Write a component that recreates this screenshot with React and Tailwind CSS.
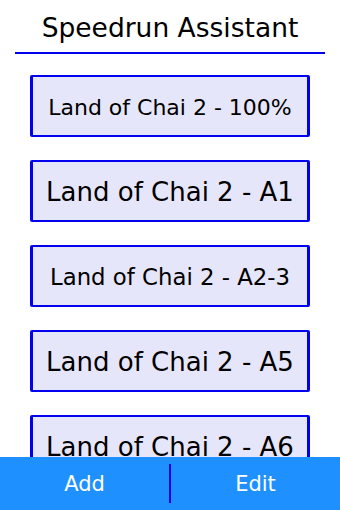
import React from "react";

const runs = [
  { name: "Land of Chai 2 - 100%", size: "text-[22px]" },
  { name: "Land of Chai 2 - A1", size: "text-[26px]" },
  { name: "Land of Chai 2 - A2-3", size: "text-[22.8px]" },
  { name: "Land of Chai 2 - A5", size: "text-[26px]" },
  { name: "Land of Chai 2 - A6", size: "text-[26px]" },
];

export default function App() {
  return (
    <div className="flex h-[510px] w-[340px] flex-col overflow-hidden bg-white font-['DejaVu_Sans',sans-serif]">
      <div className="flex h-[52px] items-center justify-center pt-[3px] text-[26.5px] text-black">Speedrun Assistant</div>
      <div className="mx-[15px] h-[2px] bg-[#0000ee]" />

      <div className="flex flex-1 flex-col items-center gap-[23px] overflow-hidden pt-[21px]">
        {runs.map(r => (
          <button
            key={r.name}
            type="button"
            className={`flex h-[62px] w-[280px] shrink-0 items-center justify-center rounded-[2px] border-x-[3px] border-y-[2px] border-[#0000ee] bg-[#e6e6fa] pt-[2px] text-black ${r.size}`}
          >
            {r.name}
          </button>
        ))}
      </div>

      <div className="flex h-[53px] shrink-0 items-center bg-[#1e90ff] text-[21px] text-white">
        <button type="button" className="flex-1 pt-[2px] text-center">Add</button>
        <div className="h-[39px] w-[2px] bg-[#0000ee]" />
        <button type="button" className="flex-1 pt-[2px] text-center">Edit</button>
      </div>
    </div>
  );
}
